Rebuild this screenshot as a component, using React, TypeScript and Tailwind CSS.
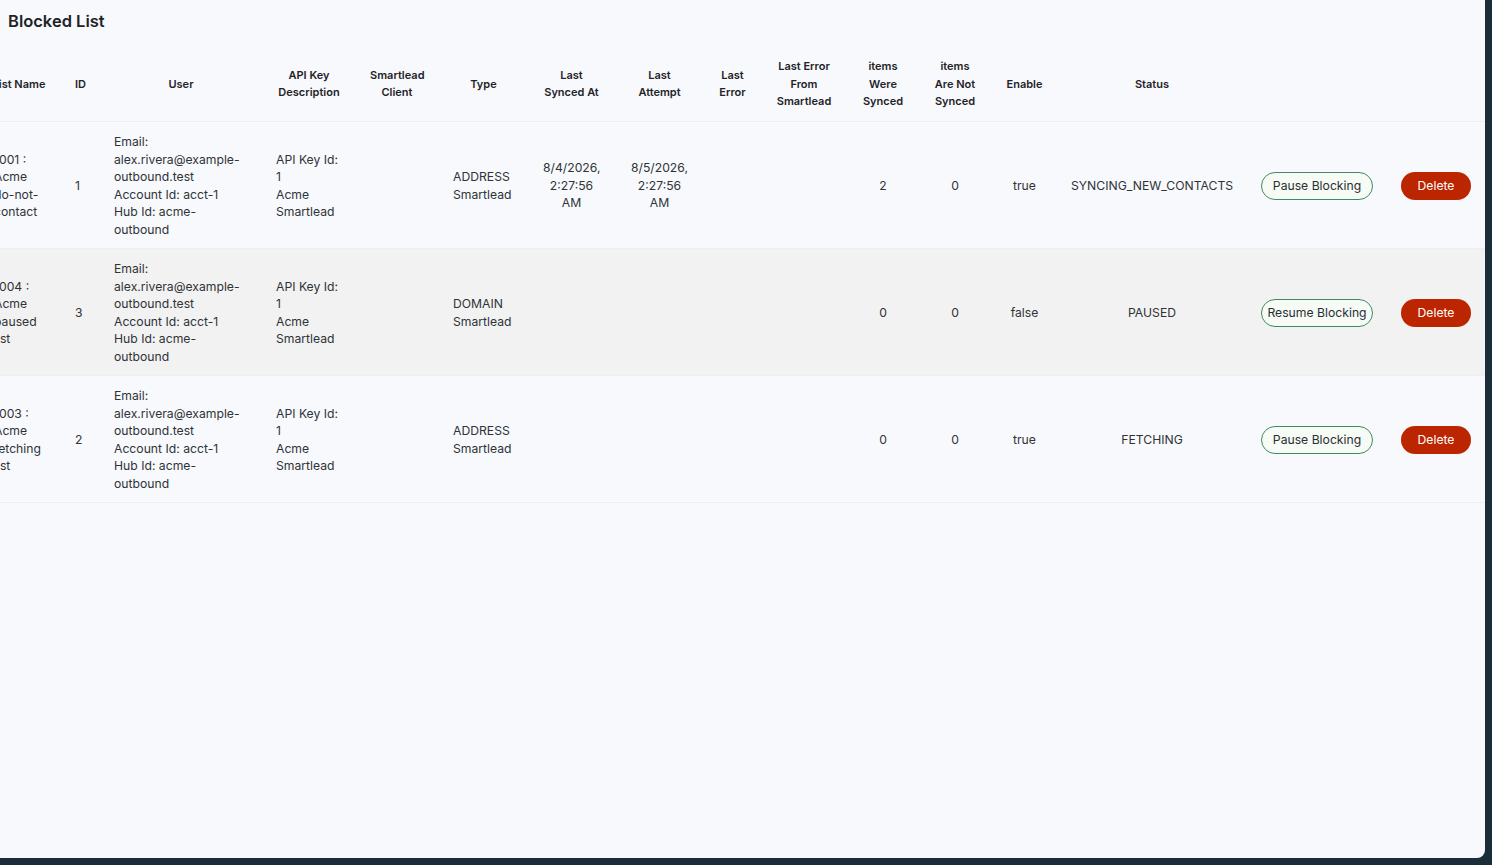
import { useEffect, useRef } from "react";

type Row = {
    name: string;
    id: number;
    type: string;
    syncedAt?: string[];
    attempt?: string[];
    synced: number;
    notSynced: number;
    enabled: boolean;
    status: string;
    paused: boolean;
};

const rows: Row[] = [
    {
        name: "1001 : Acme do-not-contact",
        id: 1,
        type: "ADDRESS",
        syncedAt: ["8/4/2026,", "2:27:56", "AM"],
        attempt: ["8/5/2026,", "2:27:56", "AM"],
        synced: 2,
        notSynced: 0,
        enabled: true,
        status: "SYNCING_NEW_CONTACTS",
        paused: false,
    },
    {
        name: "1004 : Acme paused list",
        id: 3,
        type: "DOMAIN",
        synced: 0,
        notSynced: 0,
        enabled: false,
        status: "PAUSED",
        paused: true,
    },
    {
        name: "1003 : Acme fetching list",
        id: 2,
        type: "ADDRESS",
        synced: 0,
        notSynced: 0,
        enabled: true,
        status: "FETCHING",
        paused: false,
    },
];

const headers = [
    { label: "List Name", w: "w-[88px]" },
    { label: "ID", w: "w-[39px]" },
    { label: "User", w: "w-[162px]" },
    { label: "API Key Description", w: "w-[94px]" },
    { label: "Smartlead Client", w: "w-[82px]" },
    { label: "Type", w: "w-[91px]" },
    { label: "Last Synced At", w: "w-[85px]" },
    { label: "Last Attempt", w: "w-[91px]" },
    { label: "Last Error", w: "w-[55px]" },
    { label: "Last Error From Smartlead", w: "w-[88px]" },
    { label: "items Were Synced", w: "w-[70px]" },
    { label: "items Are Not Synced", w: "w-[74px]" },
    { label: "Enable", w: "w-[65px]" },
    { label: "Status", w: "w-[190px]" },
    { label: "", w: "w-[140px]" },
    { label: "", w: "w-[98px]" },
];

const Lines = ({ lines }: { lines?: string[] }) => (
    <>{lines?.map((l) => <div key={l}>{l}</div>)}</>
);

const App = () => {
    const scroller = useRef<HTMLDivElement>(null);

    // table is scrolled all the way to the right
    useEffect(() => {
        const el = scroller.current;
        if (el) el.scrollLeft = el.scrollWidth;
    }, []);

    const td = "px-[14px] pt-[11.5px] pb-[9.5px]";

    return (
        <div className="h-[865px] w-[1492px] bg-[#1b2d39] font-['Inter','Noto_Sans',sans-serif]">
            <div className="h-[858px] w-[1485px] rounded-br-lg bg-[#f7f9fc]">
                <h1 className="px-2 pt-[10px] text-[16.5px] leading-[22px] font-semibold text-[#1f2328]">Blocked List</h1>

                <div ref={scroller} className="mt-[16px] overflow-x-auto [scrollbar-width:none]">
                    <table className="w-[1512px] table-fixed border-collapse text-[12.2px] leading-[17.5px] text-[#2f3337]">
                        <colgroup>
                            {headers.map((h, i) => <col key={i} className={h.w} />)}
                        </colgroup>
                        <thead>
                            <tr className="border-b border-[#eceef1]">
                                {headers.map((h, i) => (
                                    <th
                                        key={i}
                                        className={`pt-[10px] pb-[10px] text-center text-[11px] font-semibold text-[#1f2328] ${i === 0 ? "pr-[12px] pl-[16px] whitespace-nowrap" : "px-[14px]"}`}
                                    >
                                        {h.label}
                                    </th>
                                ))}
                            </tr>
                        </thead>
                        <tbody>
                            {rows.map((r, i) => (
                                <tr key={r.id} className={`border-b border-[#eceef1] ${i % 2 === 1 ? "bg-[#f2f2f2]" : ""}`}>
                                    <td className="pt-[11.5px] pr-[20px] pb-[9.5px] pl-[21px]">{r.name}</td>
                                    <td className={td}>{r.id}</td>
                                    <td className={td}>
                                        <div>Email:</div>
                                        <div>alex.rivera@example-outbound.test</div>
                                        <div>Account Id: acct-1</div>
                                        <div>Hub Id: acme-outbound</div>
                                    </td>
                                    <td className={td}>
                                        <div>API Key Id:</div>
                                        <div>1</div>
                                        <div>Acme Smartlead</div>
                                    </td>
                                    <td className={td}></td>
                                    <td className={`${td} pl-[15px]`}>
                                        <div>{r.type}</div>
                                        <div>Smartlead</div>
                                    </td>
                                    <td className={`${td} text-center`}><Lines lines={r.syncedAt} /></td>
                                    <td className={`${td} text-center`}><Lines lines={r.attempt} /></td>
                                    <td className={td}></td>
                                    <td className={td}></td>
                                    <td className={`${td} text-center`}>{r.synced}</td>
                                    <td className={`${td} text-center`}>{r.notSynced}</td>
                                    <td className={`${td} text-center`}>{r.enabled ? "true" : "false"}</td>
                                    <td className={`${td} text-center`}>{r.status}</td>
                                    <td className={td}>
                                        <button className="h-7 w-[112px] rounded-full border border-[#3f8a63] bg-[#f6fbf6] text-[12.2px] text-[#2a2e33]">
                                            {r.paused ? "Resume Blocking" : "Pause Blocking"}
                                        </button>
                                    </td>
                                    <td className={td}>
                                        <button className="h-7 w-[70px] rounded-full bg-[#bb2600] text-[12.2px] text-white">
                                            Delete
                                        </button>
                                    </td>
                                </tr>
                            ))}
                        </tbody>
                    </table>
                </div>
            </div>
        </div>
    );
};

export default App;
